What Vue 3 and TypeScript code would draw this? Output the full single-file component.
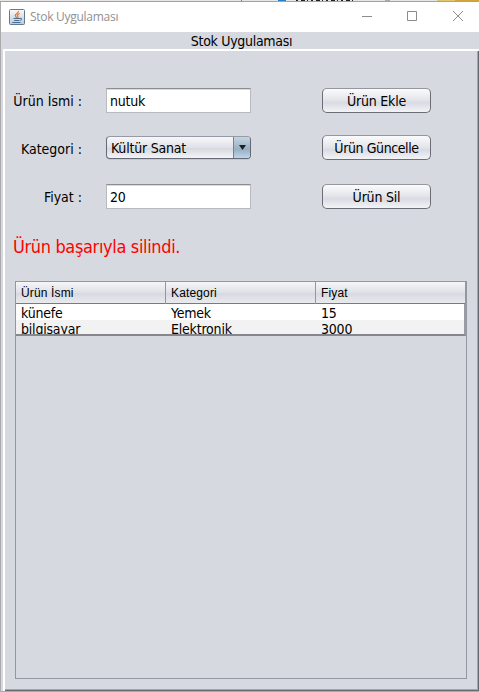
<script setup lang="ts">
import { ref } from 'vue'

interface Product {
  name: string
  category: string
  price: number
}

const name = ref('nutuk')
const category = ref('Kültür Sanat')
const price = ref('20')
const message = ref('Ürün başarıyla silindi.')
const columns: string[] = ['Ürün İsmi', 'Kategori', 'Fiyat']
const products = ref<Product[]>([
  { name: 'künefe', category: 'Yemek', price: 15 },
  { name: 'bilgisayar', category: 'Elektronik', price: 3000 },
])
</script>

<template>
  <div class="screen">
    <div class="backdrop">
      <svg width="479" height="1" viewBox="0 0 479 1">
        <rect width="479" height="1" fill="#e6e6e6" />
        <rect x="241" width="1" height="1" fill="#777" />
        <rect x="278" width="8" height="1" fill="#2b7fc9" />
        <path d="M296 .5h57" stroke="#222" stroke-dasharray="2 3 4 2 1 3" />
        <rect x="385" width="5" height="1" fill="#aaa" />
        <rect x="437" width="18" height="1" fill="#e5c66e" />
        <rect x="455" width="24" height="1" fill="#d3a33d" />
      </svg>
    </div>
    <div class="window">
      <header class="titlebar">
        <svg class="java" width="16" height="16" viewBox="0 0 16 16">
          <defs>
            <linearGradient id="jg" x1="0" y1="0" x2="0" y2="1">
              <stop offset="0" stop-color="#fafafa" />
              <stop offset="1" stop-color="#b9cbdc" />
            </linearGradient>
          </defs>
          <rect x=".5" y=".5" width="15" height="15" rx="1" fill="url(#jg)" stroke="#64798c" />
          <path d="M9.500 2C10 4 6 4.800 6.300 6.500C6.500 7.500 7.500 7.800 7.400 9M10.800 4.500C8.500 5.200 8 6.300 8.800 7.200C9.300 7.900 8.800 8.500 8.400 9" fill="none" stroke="#e8752a" stroke-width="1.300" />
          <path d="M4.500 9.500h6.500M5.200 11.500h5.200M3.300 13.500h8.200M11 9.300c2.500-.6 2.200 1.700 0 2" fill="none" stroke="#4a6d91" stroke-width="1" />
        </svg>
        <span class="caption">Stok Uygulaması</span>
        <svg class="controls" width="110" height="12" viewBox="0 0 110 12">
          <path d="M0 5.500h10M45.500 .5h9v9h-9z" fill="none" stroke="#8c8c8c" />
          <path d="M91 0l10 10M101 0l-10 10" fill="none" stroke="#8c8c8c" />
        </svg>
      </header>
      <div class="tab"><span>Stok Uygulaması</span></div>
      <main class="panel">
        <form class="form" @submit.prevent>
          <label>Ürün İsmi :</label>
          <div class="field">{{ name }}</div>
          <button type="button">Ürün Ekle</button>
          <label>Kategori :</label>
          <div class="combo">
            <span class="value">{{ category }}</span>
            <span class="arrow"><svg width="7" height="5" viewBox="0 0 7 5"><path d="M0 0h7L3.500 5z" fill="#1c2024" /></svg></span>
          </div>
          <button class="tight" type="button">Ürün Güncelle</button>
          <label>Fiyat :</label>
          <div class="field">{{ price }}</div>
          <button type="button">Ürün Sil</button>
        </form>
        <p class="message">{{ message }}</p>
        <section class="list">
          <div class="row head">
            <span v-for="c in columns" :key="c" class="cell">{{ c }}</span>
          </div>
          <div class="body">
            <div v-for="p in products" :key="p.name" class="row item">
              <span class="cell">{{ p.name }}</span>
              <span class="cell">{{ p.category }}</span>
              <span class="cell">{{ p.price }}</span>
            </div>
          </div>
        </section>
      </main>
    </div>
  </div>
</template>

<style>
body {
  margin: 0;
  overflow: hidden;
}
</style>

<style scoped>
.screen {
  box-sizing: border-box;
  width: 479px;
  height: 692px;
  display: flex;
  flex-direction: column;
  background: #d6d9df;
  font: 14px/18px "DejaVu Sans Condensed", "DejaVu Sans", sans-serif;
  font-stretch: condensed;
  letter-spacing: -0.2px;
  color: #000;
  white-space: nowrap;
}
.backdrop {
  height: 1px;
  display: flex;
}
.window {
  box-sizing: border-box;
  flex: 1;
  display: flex;
  flex-direction: column;
  border-top: 1px solid #a2a2a2;
  border-left: 1px solid #aaa;
  border-bottom: 1px solid #a9abb0;
}
.titlebar {
  height: 30px;
  display: flex;
  align-items: center;
  background: #fff;
  padding-left: 8px;
}
.caption {
  flex: 1;
  margin-left: 5px;
  font: 12px/16px "Open Sans", "Noto Sans", sans-serif;
  letter-spacing: -0.28px;
  color: #919191;
}
.controls {
  margin-right: 7px;
}
.tab {
  height: 17px;
  display: flex;
  justify-content: center;
  padding-left: 3px;
  letter-spacing: -0.3px;
}
.panel {
  box-sizing: border-box;
  flex: 1;
  margin-left: 2px;
  border: 2px solid #fff;
  border-right: 0;
  border-bottom: 0;
  padding: 37px 10px 0 0;
  box-shadow: inset -1px -1px #666a70, inset -2px -2px #a4a7ad;
}
.form {
  display: grid;
  grid-template-columns: 77px 193px 133px;
  grid-template-rows: 25px 25px 25px;
  row-gap: 23px;
  align-items: center;
}
.form label {
  justify-self: end;
  letter-spacing: 0;
}
.form .field,
.form .combo {
  margin-left: 24px;
}
.field {
  box-sizing: border-box;
  width: 145px;
  height: 25px;
  border: 1px solid #b8babf;
  border-top-color: #8d8e8f;
  background: #fff;
  box-shadow: inset 0 1px #d9dadb;
  padding: 3px;
}
.combo {
  align-self: start;
  box-sizing: border-box;
  width: 145px;
  height: 23px;
  display: flex;
  overflow: hidden;
  border: 1px solid #646975;
  border-top-color: #9799a5;
  border-radius: 4px;
  background: linear-gradient(#f7f7fa, #e0e2e8 50%, #d6d9e0 55%, #f3f4f7);
  box-shadow: 0 1px #c5c8ce;
}
.value {
  flex: 1;
  padding: 2px 4px;
}
.arrow {
  width: 16px;
  display: flex;
  align-items: center;
  justify-content: center;
  border-left: 1px solid #6f8497;
  background: linear-gradient(#c5d4e2, #a0b4c6 50%, #9bb0c3 60%, #bdd6eb);
}
button {
  box-sizing: border-box;
  width: 109px;
  height: 25px;
  margin: 0 0 0 47px;
  padding: 0;
  border: 1px solid #6b6e76;
  border-top-color: #94979e;
  border-radius: 5px;
  background: linear-gradient(#fbfbfc, #e2e4e9 50%, #d8dbe2 60%, #f3f4f7);
  font: inherit;
  letter-spacing: inherit;
  color: #000;
}
button.tight {
  margin-top: -2px;
  letter-spacing: -0.4px;
}
.message {
  margin: 26px 0 0 8px;
  font-size: 18px;
  line-height: 24px;
  letter-spacing: -0.35px;
  color: #f00;
}
.list {
  box-sizing: border-box;
  width: 452px;
  height: 398px;
  margin: 22px 0 0 10px;
  border: 1px solid #9297a1;
}
.row {
  display: grid;
  grid-template-columns: 150px 150px 150px;
}
.cell {
  padding-left: 5px;
}
.head {
  height: 21px;
  border-bottom: 1px solid #777a82;
  background: linear-gradient(#f5f6f8, #dfe1e6 50%, #d8dae1 55%, #e8eaed);
  font: 12px/22px "Liberation Sans", sans-serif;
  letter-spacing: 0.15px;
}
.head .cell {
  box-sizing: border-box;
  border-right: 1px solid #9297a1;
}
.body {
  box-sizing: border-box;
  height: 32px;
  overflow: hidden;
  border-right: 2px solid #999ca3;
  border-bottom: 2px solid #85878c;
}
.item {
  height: 16px;
  line-height: 18px;
  background: #fff;
}
.item:nth-child(even) {
  background: #f2f2f2;
}
</style>
